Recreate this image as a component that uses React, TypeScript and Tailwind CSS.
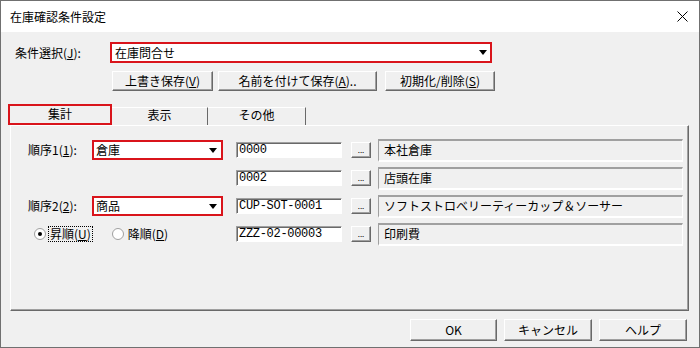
import React from "react";

const jp = "font-['Noto_Sans_CJK_JP','Noto_Sans',sans-serif]";
const raised =
  "bg-[#f0f0f0] border-t border-l border-t-white border-l-white border-r border-b border-r-[#696969] border-b-[#696969] shadow-[inset_-1px_-1px_0_#a0a0a0]";
const sunken =
  "bg-white border-t border-l border-t-[#a0a0a0] border-l-[#a0a0a0] border-r border-b border-r-white border-b-white shadow-[inset_1px_1px_0_#696969]";

function Arrow() {
  return (
    <svg width="8" height="5" viewBox="0 0 8 5">
      <path d="M0 0 H8 L4 5 Z" fill="#000" />
    </svg>
  );
}

function Combo({ value, width }: { value: string; width: string }) {
  return (
    <div className={`${width} h-[20px] border-2 border-[#d9141b] bg-white flex items-center justify-between pl-[2px] pr-[4px]`}>
      <span className="text-[12px] leading-none">{value}</span>
      <Arrow />
    </div>
  );
}

function Btn({ children, className }: { children: React.ReactNode; className: string }) {
  return (
    <div className={`${raised} ${className} flex items-center justify-center text-[12px] leading-none`}>
      {children}
    </div>
  );
}

function Row({ left, code, name }: { left?: React.ReactNode; code: string; name: string }) {
  return (
    <div className="h-[28px] flex items-center pl-[17px]">
      <div className="w-[208px] flex items-center">{left}</div>
      <div className={`${sunken} w-[106px] h-[16px] flex items-center pl-[2px]`}>
        <span className="font-['Liberation_Mono',monospace] text-[12px] leading-none tracking-[-0.3px]">{code}</span>
      </div>
      <div className={`${raised} ml-[9px] w-[20px] h-[16px] flex items-end justify-center pb-[3px]`}>
        <span className="text-[8px] leading-none">...</span>
      </div>
      <div className="ml-[7px] w-[305px] h-[23px] bg-[#f0f0f0] border-t-2 border-l border-t-[#a0a0a0] border-l-[#a0a0a0] border-r border-b-2 border-r-white border-b-white flex items-center pl-[5px]">
        <span className="text-[12px] leading-none">{name}</span>
      </div>
    </div>
  );
}

function Radio({ checked, label, focus }: { checked?: boolean; label: React.ReactNode; focus?: boolean }) {
  return (
    <div className="flex items-center">
      <div className="w-[12px] h-[12px] rounded-full border border-[#a0a0a0] bg-white flex items-center justify-center">
        {checked && <div className="w-[4px] h-[4px] rounded-full bg-black" />}
      </div>
      <span className={`ml-[3px] text-[12px] leading-none px-[1px] py-[1px] ${focus ? "outline outline-1 outline-dotted outline-black" : ""}`}>
        {label}
      </span>
    </div>
  );
}

export default function App() {
  return (
    <div className={`${jp} w-[700px] h-[348px] border border-[#707070] bg-[#f0f0f0] flex flex-col text-black`}>
      <div className="h-[31px] bg-white flex items-center justify-between pl-[9px] pr-[11px]">
        <span className="text-[12px] leading-none">在庫確認条件設定</span>
        <svg width="11" height="11" viewBox="0 0 11 11">
          <path d="M0.5 0.5 L10.5 10.5 M10.5 0.5 L0.5 10.5" stroke="#000" strokeWidth="1" />
        </svg>
      </div>

      <div className="flex items-center mt-[10px] pl-[14px]">
        <span className="w-[95px] text-[12px] leading-none">
          条件選択(<span className="underline">J</span>):
        </span>
        <div className="w-[382px] h-[21px] border-2 border-[#d9141b] bg-white flex items-center justify-between pl-[3px] pr-[3px]">
          <span className="text-[12px] leading-none">在庫問合せ</span>
          <Arrow />
        </div>
      </div>

      <div className="flex mt-[8px] pl-[111px] gap-[5px]">
        <Btn className="w-[101px] h-[20px]">
          上書き保存(<span className="underline">V</span>)
        </Btn>
        <Btn className="w-[159px] h-[20px]">
          名前を付けて保存(<span className="underline">A</span>)..
        </Btn>
        <Btn className="w-[110px] h-[20px] ml-[3px]">
          初期化/削除(<span className="underline">S</span>)
        </Btn>
      </div>

      <div className="flex items-end mt-[13px] pl-[7px] h-[21px]">
        <div className="w-[104px] h-[21px] border-2 border-[#d9141b] bg-[#f0f0f0] flex items-center justify-center pb-[2px] text-[12px] leading-none">
          集計
        </div>
        <div className="w-[96px] h-[18px] border-t border-t-white border-r border-r-[#696969] flex items-center justify-center pb-[4px] text-[12px] leading-none">
          表示
        </div>
        <div className="w-[98px] h-[18px] border-t border-t-white border-r border-r-[#696969] flex items-center justify-center pb-[4px] text-[12px] leading-none">
          その他
        </div>
      </div>

      <div className="ml-[9px] w-[679px] h-[186px] border-t border-l border-t-white border-l-white border-r border-b border-r-[#696969] border-b-[#696969] shadow-[inset_-1px_-1px_0_#a0a0a0] pt-[10px]">
        <Row
          left={
            <>
              <span className="w-[64px] text-[12px] leading-none">
                順序1(<span className="underline">1</span>):
              </span>
              <Combo value="倉庫" width="w-[131px]" />
            </>
          }
          code="0000"
          name="本社倉庫"
        />
        <Row code="0002" name="店頭在庫" />
        <Row
          left={
            <>
              <span className="w-[64px] text-[12px] leading-none">
                順序2(<span className="underline">2</span>):
              </span>
              <Combo value="商品" width="w-[131px]" />
            </>
          }
          code="CUP-SOT-0001"
          name="ソフトストロベリーティーカップ＆ソーサー"
        />
        <Row
          left={
            <div className="flex items-center gap-[20px] pl-[6px]">
              <Radio checked focus label={<>昇順(<span className="underline">U</span>)</>} />
              <Radio label={<>降順(<span className="underline">D</span>)</>} />
            </div>
          }
          code="ZZZ-02-00003"
          name="印刷費"
        />
      </div>

      <div className="flex justify-end gap-[7px] mt-[8px] pr-[12px]">
        <Btn className="w-[87px] h-[22px]">OK</Btn>
        <Btn className="w-[88px] h-[22px]">キャンセル</Btn>
        <Btn className="w-[88px] h-[22px]">ヘルプ</Btn>
      </div>
    </div>
  );
}
